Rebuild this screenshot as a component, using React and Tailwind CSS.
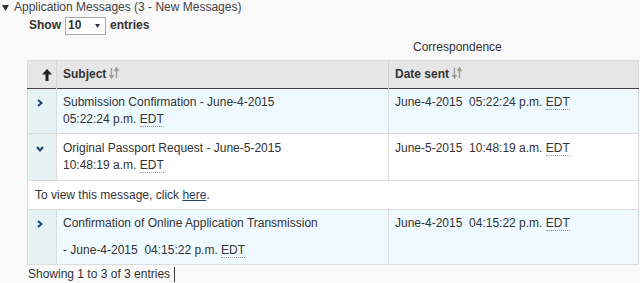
import React from "react";

const SortIcon = () => (
  <svg width="10" height="12" viewBox="0 0 10 12" className="inline-block ml-[3px] align-[-1px]">
    <path d="M2.5 1 V10 M0.5 8 L2.5 11 L4.5 8" stroke="#9a9a9a" strokeWidth="1.4" fill="none" />
    <path d="M7.5 11 V2 M5.5 4 L7.5 1 L9.5 4" stroke="#9a9a9a" strokeWidth="1.4" fill="none" />
  </svg>
);

const UpArrow = () => (
  <svg width="10" height="12" viewBox="0 0 10 12" className="inline-block">
    <path d="M5 0 L10 5.5 L6.5 5.5 L6.5 12 L3.5 12 L3.5 5.5 L0 5.5 Z" fill="#222" />
  </svg>
);

const ChevRight = () => (
  <svg width="6" height="8" viewBox="0 0 6 8" className="block">
    <path d="M1 1 L4.5 4 L1 7" stroke="#1f3f6e" strokeWidth="2" fill="none" />
  </svg>
);

const ChevDown = () => (
  <svg width="8" height="6" viewBox="0 0 8 6" className="block">
    <path d="M1 1 L4 4.5 L7 1" stroke="#1f3f6e" strokeWidth="2" fill="none" />
  </svg>
);

const Abbr = ({ children }) => (
  <span className="border-b border-dotted border-[#999]">{children}</span>
);

export default function App() {
  return (
    <div
      className="w-[640px] h-[283px] overflow-hidden bg-[#f9f9f9] text-[12px] leading-[17px] text-[#333]"
      style={{ fontFamily: '"Liberation Sans", Arial, sans-serif' }}
    >
      <div className="flex items-center pl-[2px] h-[15px]">
        <svg width="7" height="6" viewBox="0 0 7 6" className="mr-[5px]">
          <path d="M0 0 L7 0 L3.5 6 Z" fill="#333" />
        </svg>
        <span className="text-[#444]">Application Messages (3 - New Messages)</span>
      </div>
      <div className="flex items-center pl-[29px] mt-[1px] h-[19px] font-bold">
        <span>Show</span>
        <span className="ml-[4px] mr-[4px] w-[41px] h-[18px] bg-white border border-[#aaa] flex items-center justify-between pl-[2px] pr-[5px]">
          <span>10</span>
          <svg width="5" height="4" viewBox="0 0 5 4">
            <path d="M0 0 L5 0 L2.5 4 Z" fill="#333" />
          </svg>
        </span>
        <span>entries</span>
      </div>
      <div className="h-[25px] flex items-center pl-[413px]">Correspondence</div>
      <table className="ml-[27px] w-[612px] table-fixed border-collapse border border-[#ddd]">
        <colgroup>
          <col className="w-[29px]" />
          <col className="w-[332px]" />
          <col />
        </colgroup>
        <thead>
          <tr className="bg-[#e6e6e6] h-[28px] border-b border-b-[#444]">
            <th className="border-r border-[#d4d4d4] text-right pr-[4px] align-middle">
              <UpArrow />
            </th>
            <th className="text-left font-bold pl-[6px] border-r border-[#d4d4d4]">
              Subject
              <SortIcon />
            </th>
            <th className="text-left font-bold pl-[6px]">
              Date sent
              <SortIcon />
            </th>
          </tr>
        </thead>
        <tbody>
          <tr className="bg-[#eefaff] border-b border-[#dcdcdc]">
            <td className="bg-[#e6f3f5] border-r border-[#dcdcdc] align-top pl-[9px] pt-[10px]">
              <ChevRight />
            </td>
            <td className="align-top pl-[6px] py-[5px] border-r border-[#dcdcdc]">
              Submission Confirmation - June-4-2015
              <br />
              05:22:24 p.m. <Abbr>EDT</Abbr>
            </td>
            <td className="align-top pl-[6px] py-[5px]">
              June-4-2015&nbsp; 05:22:24 p.m. <Abbr>EDT</Abbr>
            </td>
          </tr>
          <tr className="bg-white border-b border-[#dcdcdc]">
            <td className="bg-[#e6f3f5] border-r border-[#dcdcdc] align-top pl-[8px] pt-[12px]">
              <ChevDown />
            </td>
            <td className="align-top pl-[6px] pt-[6px] pb-[6px] border-r border-[#dcdcdc]">
              Original Passport Request - June-5-2015
              <br />
              10:48:19 a.m. <Abbr>EDT</Abbr>
            </td>
            <td className="align-top pl-[6px] pt-[6px] pb-[6px]">
              June-5-2015&nbsp; 10:48:19 a.m. <Abbr>EDT</Abbr>
            </td>
          </tr>
          <tr className="bg-white border-b border-[#dcdcdc]">
            <td colSpan={3} className="pl-[7px] h-[29px] align-middle">
              To view this message, click{" "}
              <a href="#" className="underline text-[#284162]">
                here
              </a>
              .
            </td>
          </tr>
          <tr className="bg-[#eefaff]">
            <td className="bg-[#e6f3f5] border-r border-[#dcdcdc] align-top pl-[9px] pt-[10px]">
              <ChevRight />
            </td>
            <td className="align-top pl-[6px] py-[5px] border-r border-[#dcdcdc]">
              <p className="mb-[10px]">Confirmation of Online Application Transmission</p>
              - June-4-2015&nbsp; 04:15:22 p.m. <Abbr>EDT</Abbr>
            </td>
            <td className="align-top pl-[6px] py-[5px]">
              June-4-2015&nbsp; 04:15:22 p.m. <Abbr>EDT</Abbr>
            </td>
          </tr>
        </tbody>
      </table>
      <div className="pl-[28px] pt-[1px] flex items-center">
        Showing 1 to 3 of 3 entries
        <span className="ml-[4px] inline-block w-[1px] h-[15px] bg-[#333]" />
      </div>
    </div>
  );
}
